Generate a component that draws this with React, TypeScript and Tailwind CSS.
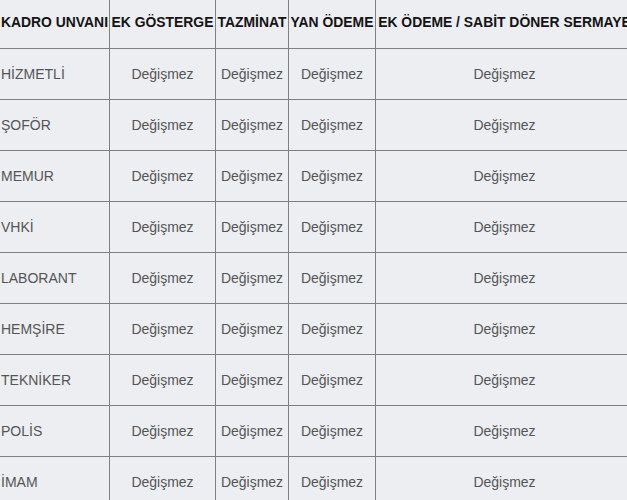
const columns = [
  { title: "KADRO UNVANI", width: "w-[110px]" },
  { title: "EK GÖSTERGE", width: "w-[106px]" },
  { title: "TAZMİNAT", width: "w-[73px]" },
  { title: "YAN ÖDEME", width: "w-[87px]" },
  { title: "EK ÖDEME / SABİT DÖNER SERMAYE", width: "w-[258px]" },
];

const rows = [
  "HİZMETLİ",
  "ŞOFÖR",
  "MEMUR",
  "VHKİ",
  "LABORANT",
  "HEMŞİRE",
  "TEKNİKER",
  "POLİS",
  "İMAM",
];

const App = () => {
  return (
    <div
      className="h-[500px] w-[627px] overflow-hidden bg-[#eceef2]"
      style={{ fontFamily: '"Liberation Sans", Arial, sans-serif' }}
    >
      <table className="ml-[-1px] mt-[-5px] w-[634px] table-fixed border-collapse">
        <thead>
          <tr className="h-[53px]">
            {columns.map((col) => (
              <th
                key={col.title}
                className={`${col.width} whitespace-nowrap border border-[#808080] px-0 text-center align-middle text-[13.9px] font-bold text-[#141414]`}
              >
                {col.title}
              </th>
            ))}
          </tr>
        </thead>
        <tbody>
          {rows.map((name) => (
            <tr key={name} className="h-[51px]">
              <td className="border border-[#808080] pl-[1px] text-left align-middle text-[14px] text-[#555]">
                {name}
              </td>
              <td className="border border-[#808080] text-center align-middle text-[14px] text-[#555]">
                Değişmez
              </td>
              <td className="border border-[#808080] text-center align-middle text-[14px] text-[#555]">
                Değişmez
              </td>
              <td className="border border-[#808080] text-center align-middle text-[14px] text-[#555]">
                Değişmez
              </td>
              <td className="border border-[#808080] text-center align-middle text-[14px] text-[#555]">
                Değişmez
              </td>
            </tr>
          ))}
        </tbody>
      </table>
    </div>
  );
};

export default App;
